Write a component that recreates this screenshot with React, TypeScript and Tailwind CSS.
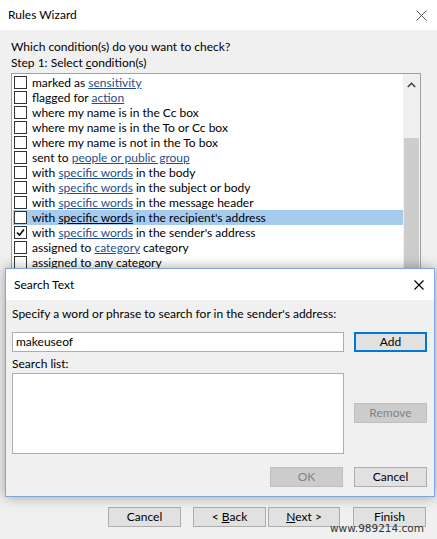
import type { ReactNode } from "react";

type Cond = { pre: string; link?: string; post?: string; checked?: boolean; selected?: boolean };

const conditions: Cond[] = [
  { pre: "marked as ", link: "sensitivity" },
  { pre: "flagged for ", link: "action" },
  { pre: "where my name is in the Cc box" },
  { pre: "where my name is in the To or Cc box" },
  { pre: "where my name is not in the To box" },
  { pre: "sent to ", link: "people or public group" },
  { pre: "with ", link: "specific words", post: " in the body" },
  { pre: "with ", link: "specific words", post: " in the subject or body" },
  { pre: "with ", link: "specific words", post: " in the message header" },
  { pre: "with ", link: "specific words", post: " in the recipient's address", selected: true },
  { pre: "with ", link: "specific words", post: " in the sender's address", checked: true },
  { pre: "assigned to ", link: "category", post: " category" },
  { pre: "assigned to any category" },
];

function Checkbox({ checked }: { checked?: boolean }) {
  return (
    <span className="w-[13px] h-[13px] shrink-0 border border-[#333333] bg-white flex items-center justify-center">
      {checked && (
        <svg width="9" height="9" viewBox="0 0 9 9">
          <path d="M1 4.5 L3.5 7 L8 1.5" fill="none" stroke="#000" strokeWidth="1.6" />
        </svg>
      )}
    </span>
  );
}

function Button({ children, disabled, primary, className = "" }: { children: ReactNode; disabled?: boolean; primary?: boolean; className?: string }) {
  const tone = disabled
    ? "bg-[#cccccc] border border-[#bfbfbf] text-[#838383]"
    : primary
      ? "bg-[#e1e1e1] border-2 border-[#0078d7] text-black"
      : "bg-[#e1e1e1] border border-[#adadad] text-black";
  return (
    <div className={`h-[20px] flex items-center justify-center text-[12px] leading-none ${tone} ${className}`}>
      {children}
    </div>
  );
}

function CloseX({ size, stroke, color }: { size: number; stroke: number; color: string }) {
  return (
    <svg width={size} height={size} viewBox="0 0 10 10">
      <path d="M0.5 0.5 L9.5 9.5 M9.5 0.5 L0.5 9.5" stroke={color} strokeWidth={stroke} />
    </svg>
  );
}

export default function App() {
  return (
    <div
      className="relative w-[437px] h-[539px] overflow-hidden bg-[#f0f0f0] text-[12px] text-black"
      style={{ fontFamily: '"Segoe UI", Lato, "Noto Sans", sans-serif' }}
    >
      {/* Title bar */}
      <div className="h-[30px] bg-white flex items-center justify-between pl-[8px] pr-[10px]">
        <span className="text-[12px]">Rules Wizard</span>
        <CloseX size={11} stroke={0.9} color="#555" />
      </div>

      {/* Body */}
      <div className="pl-[11px] pr-[16px] pt-[9px]">
        <p className="leading-[16px]">Which condition(s) do you want to check?</p>
        <p className="leading-[16px]">
          Step 1: Select <span className="underline">c</span>ondition(s)
        </p>

        <div className="mt-[2px] h-[420px] border border-[#a0a0a0] bg-white flex">
          <div className="flex-1 pt-[1px] pl-[1px] overflow-hidden">
            {conditions.map((c, i) => (
              <div
                key={i}
                className={`h-[15px] flex items-center gap-[5px] pl-[1px] whitespace-nowrap ${c.selected ? "bg-[#a6cbef]" : ""}`}
              >
                <Checkbox checked={c.checked} />
                <span className="leading-none">
                  {c.pre}
                  {c.link && (
                    <span className={`underline ${c.selected ? "text-black" : "text-[#1f4e8c]"}`}>{c.link}</span>
                  )}
                  {c.post}
                </span>
              </div>
            ))}
          </div>
          {/* Scrollbar */}
          <div className="w-[17px] bg-[#f0f0f0] flex flex-col">
            <div className="h-[17px] mt-[2px] flex items-center justify-center">
              <svg width="9" height="6" viewBox="0 0 9 6">
                <path d="M0.8 5 L4.5 1.3 L8.2 5" fill="none" stroke="#404040" strokeWidth="1.6" />
              </svg>
            </div>
            <div className="mt-[45px] mx-[1px] flex-1 bg-[#cdcdcd]" />
          </div>
        </div>
      </div>

      {/* Wizard buttons */}
      <div className="absolute left-[108px] top-[507px] flex">
        <Button className="w-[73px]">Cancel</Button>
        <Button className="w-[73px] ml-[12px]">
          &lt; <span className="underline ml-[3px]">B</span>ack
        </Button>
        <Button className="w-[72px] ml-[2px]">
          <span className="underline">N</span>ext &gt;
        </Button>
        <Button className="w-[73px] ml-[13px]">Finish</Button>
      </div>

      {/* Search Text dialog */}
      <div className="absolute left-[5px] top-[268px] w-[430px] h-[229px] border border-[#7ea6d6] bg-[#f0f0f0] shadow-[0_0_12px_rgba(0,0,0,0.35)] flex flex-col">
        <div className="h-[31px] bg-white flex items-center justify-between pl-[8px] pr-[10px]">
          <span className="text-[12px]">Search Text</span>
          <CloseX size={10} stroke={1.2} color="#000" />
        </div>
        <div className="pl-[6px] pr-[7px] pt-[6px] flex flex-col">
          <p className="leading-[16px]">Specify a word or phrase to search for in the sender's address:</p>
          <div className="mt-[10px] flex gap-[10px]">
            <div className="w-[332px] h-[20px] bg-white border border-[#adadad] flex items-center pl-[3px]">
              makeuseof
            </div>
            <Button primary className="w-[73px]">Add</Button>
          </div>
          <p className="mt-[4px] leading-[16px]">Search list:</p>
          <div className="mt-[1px] flex gap-[10px]">
            <div className="w-[332px] h-[81px] bg-white border border-[#adadad]" />
            <Button disabled className="w-[73px] mt-[30px]">Remove</Button>
          </div>
          <div className="mt-[13px] flex justify-end gap-[11px]">
            <Button disabled className="w-[73px]">OK</Button>
            <Button className="w-[73px]">Cancel</Button>
          </div>
        </div>
      </div>

      {/* watermark */}
      <span
        className="absolute left-[330px] top-[522px] text-[10.5px] leading-[12px] text-[#333]"
        style={{ fontFamily: '"DejaVu Sans", sans-serif' }}
      >
        www.989214.com
      </span>
    </div>
  );
}
